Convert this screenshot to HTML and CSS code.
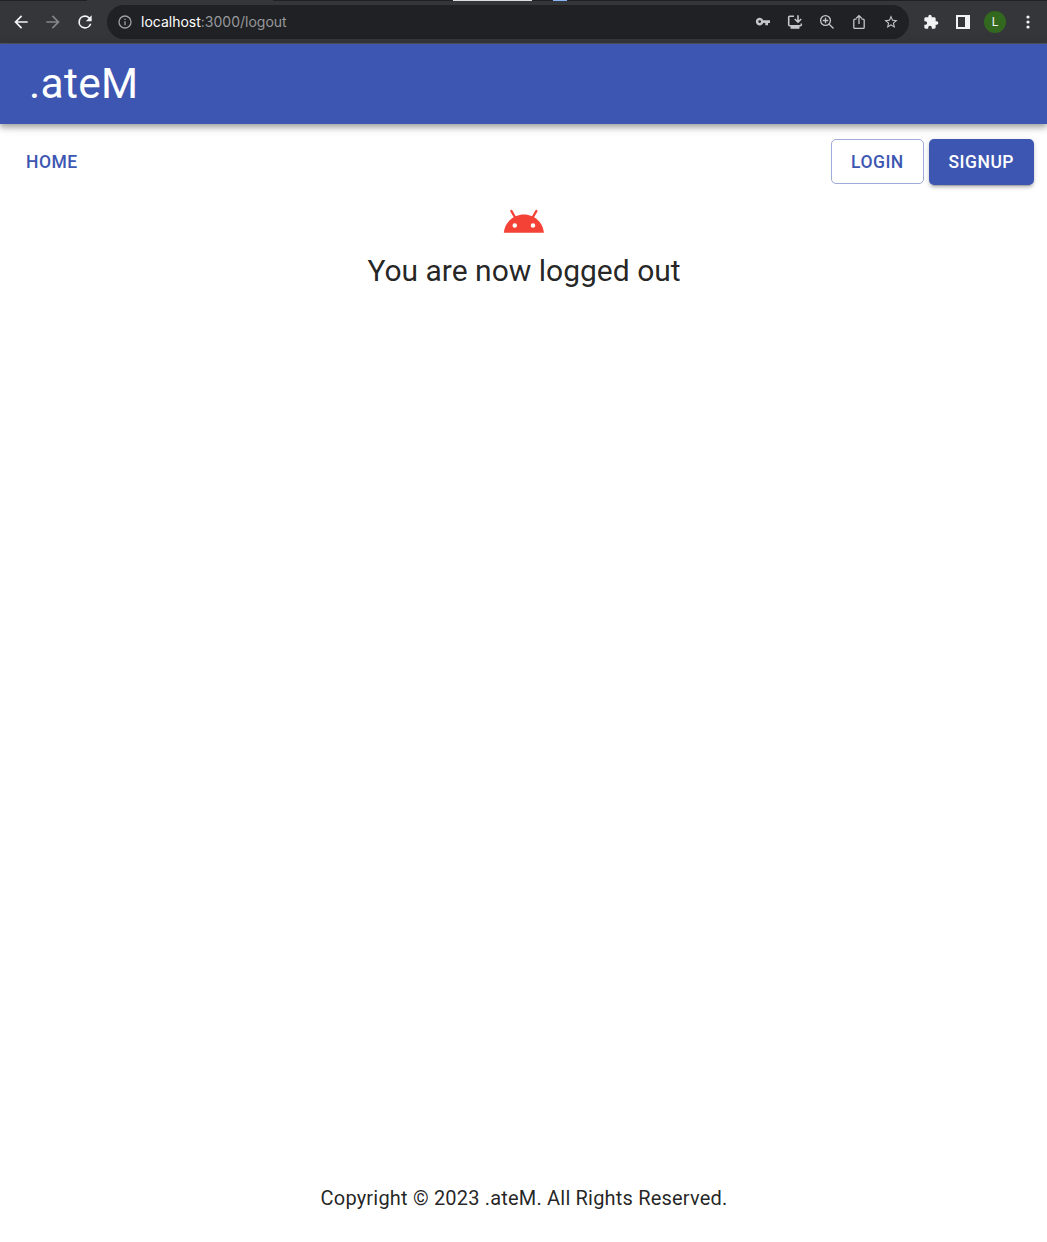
FILE: index.html
```html
<!DOCTYPE html>
<html lang="en">
<head>
<meta charset="utf-8">
<title>.ateM</title>
<link rel="stylesheet" href="styles.css">
</head>
<body>
<div class="browser">
  <div class="tab-edge"><span class="active-tab"></span><span class="tab-title"></span><span class="tab-favicon"></span></div>
  <div class="toolbar">
    <svg class="icon back" viewBox="0 0 24 24"><path d="M20 11H7.83l5.59-5.59L12 4l-8 8 8 8 1.41-1.41L7.83 13H20v-2z"/></svg>
    <svg class="icon forward" viewBox="0 0 24 24"><path d="M12 4l-1.41 1.41L16.17 11H4v2h12.17l-5.58 5.59L12 20l8-8z"/></svg>
    <svg class="icon reload" viewBox="0 0 24 24"><path d="M17.65 6.35A7.96 7.96 0 0 0 12 4a8 8 0 1 0 7.73 10h-2.08A6 6 0 1 1 12 6c1.66 0 3.14.69 4.22 1.78L13 11h7V4z"/></svg>
    <div class="omnibox">
      <svg class="info" viewBox="0 0 24 24"><path d="M11 7h2v2h-2zm0 4h2v6h-2zm1-9a10 10 0 1 0 0 20 10 10 0 0 0 0-20zm0 18a8 8 0 1 1 0-16 8 8 0 0 1 0 16z"/></svg>
      <div class="url"><span class="host">localhost</span>:3000/logout</div>
      <div class="actions">
        <svg viewBox="0 0 16 16"><path fill-rule="evenodd" d="M8.2 6.3A3.8 3.8 0 1 0 8.2 8.9H10.3V11.3H13V8.9H15V6.3ZM4.7 6.2a1.4 1.4 0 1 1 0 2.8 1.4 1.4 0 0 1 0-2.8Z"/></svg>
        <svg viewBox="0 0 16 16"><path class="stroke" d="M7 2.3H2.7Q1.7 2.3 1.7 3.3V10.7Q1.7 11.7 2.7 11.7H13.3Q14.3 11.7 14.3 10.7V9.5M11 1.2V8M7.8 5L11 8.2L14.2 5"/><path d="M3.5 12h9v2.8h-9z"/></svg>
        <svg viewBox="0 0 16 16"><path class="stroke thin" d="M10.2 10.2L14.5 14.5M3.8 6.5H9.2M6.5 3.8V9.2"/><circle class="stroke thin" cx="6.5" cy="6.5" r="4.9"/></svg>
        <svg viewBox="0 0 16 16"><path class="stroke thin" d="M5.5 5.2H3.8Q2.8 5.2 2.8 6.2V13.4Q2.8 14.4 3.8 14.4H12.2Q13.2 14.4 13.2 13.4V6.2Q13.2 5.2 12.2 5.2H10.5M8 10V1.8M5.3 4.3L8 1.6L10.7 4.3"/></svg>
        <svg viewBox="0 0 24 24"><path d="M22 9.24l-7.19-.62L12 2 9.19 8.63 2 9.24l5.46 4.73L5.82 21 12 17.27 18.18 21l-1.63-7.03L22 9.24zM12 15.4l-3.76 2.27 1-4.28-3.32-2.88 4.38-.38L12 6.1l1.71 4.04 4.38.38-3.32 2.88 1 4.28L12 15.4z"/></svg>
      </div>
    </div>
    <svg class="extension" viewBox="0 0 24 24"><path d="M20.5 11H19V7c0-1.1-.9-2-2-2h-4V3.5C13 2.12 11.88 1 10.5 1S8 2.12 8 3.5V5H4c-1.1 0-1.99.9-1.99 2v3.8H3.5c1.49 0 2.7 1.21 2.7 2.7s-1.21 2.7-2.7 2.7H2V20c0 1.1.9 2 2 2h3.8v-1.5c0-1.49 1.21-2.7 2.7-2.7s2.7 1.21 2.7 2.7V22H17c1.1 0 2-.9 2-2v-4h1.5a2.5 2.5 0 0 0 0-5z"/></svg>
    <svg class="panel" viewBox="0 0 14 14"><path fill-rule="evenodd" d="M0 0h14v14H0zM2 2v10h7V2z"/></svg>
    <span class="avatar">L</span>
    <svg class="menu" viewBox="0 0 4 14"><circle cx="2" cy="2" r="1.6"/><circle cx="2" cy="7" r="1.6"/><circle cx="2" cy="12" r="1.6"/></svg>
  </div>
</div>
<header class="app-bar"><h1>.ateM</h1></header>
<nav class="nav">
  <a class="button">HOME</a>
  <div class="nav-right">
    <a class="button outlined">LOGIN</a>
    <a class="button contained">SIGNUP</a>
  </div>
</nav>
<main class="content">
  <svg class="android" viewBox="0 0 24 24"><path d="M17.6 9.48l1.84-3.18c.16-.31.04-.69-.26-.85-.29-.15-.65-.06-.83.22l-1.88 3.24c-2.86-1.21-6.08-1.21-8.94 0L5.65 5.67c-.19-.29-.58-.38-.87-.2-.28.18-.37.54-.22.83L6.4 9.48C3.3 11.25 1.28 14.44 1 18h22c-.28-3.56-2.3-6.75-5.4-8.52zM7 15.25a1.25 1.25 0 1 1 0-2.5 1.25 1.25 0 0 1 0 2.5zm10 0a1.25 1.25 0 1 1 0-2.5 1.25 1.25 0 0 1 0 2.5z"/></svg>
  <h2>You are now logged out</h2>
</main>
<footer class="footer">Copyright © 2023 .ateM. All Rights Reserved.</footer>
</body>
</html>
```

FILE: styles.css
```css
* { box-sizing: border-box; }
body {
  margin: 0;
  height: 1242px;
  display: flex;
  flex-direction: column;
  overflow: hidden;
  background: #fff;
  color: rgba(0, 0, 0, .87);
  font-family: Roboto, "Liberation Sans", sans-serif;
}
svg { display: block; flex: none; fill: currentColor; }

.browser {
  height: 44px;
  flex: none;
  background: #35363a;
  border-bottom: 1px solid #56575a;
  color: #f1f3f4;
}
.tab-edge { height: 1px; background: #202124; display: flex; padding-left: 87px; }
.active-tab { width: 186px; background: #35363a; }
.tab-title { width: 79px; margin-left: 180px; background: #dadce0; }
.tab-favicon { width: 14px; margin-left: 21px; background: #8ab4f8; }
.toolbar { height: 42px; display: flex; align-items: center; padding: 0 17px 0 11px; }
.icon { width: 20px; height: 20px; margin-right: 12px; }
.forward { color: #85868a; }
.omnibox {
  width: 802px;
  height: 34px;
  flex: none;
  display: flex;
  align-items: center;
  padding: 0 10px;
  border-radius: 17px;
  background: #202124;
  color: #9aa0a6;
}
.info { width: 16px; height: 16px; }
.url { margin: 0 0 2px 8px; font: 14px Inter, "Liberation Sans", sans-serif; color: #96989b; }
.host { color: #fff; }
.actions { margin-left: auto; display: flex; gap: 16px; color: #c4c6c8; }
.actions svg { width: 16px; height: 16px; }
.stroke { fill: none; stroke: currentColor; stroke-width: 1.6; }
.thin { stroke-width: 1.3; }
.extension { width: 16px; height: 16px; margin-left: 14px; }
.panel { width: 14px; height: 14px; margin-left: 17px; }
.avatar {
  width: 22px;
  height: 22px;
  flex: none;
  margin-left: 14px;
  border-radius: 50%;
  background: #33691e;
  font-size: 12px;
  line-height: 23px;
  text-align: center;
}
.menu { width: 4px; height: 14px; margin-left: 19.5px; }

.app-bar {
  height: 80px;
  flex: none;
  display: flex;
  align-items: center;
  padding: 1px 0 0 29px;
  background: #3d56b2;
  color: #fff;
  box-shadow: 0 2px 5px rgba(0, 0, 0, .2), 0 5px 6px rgba(0, 0, 0, .14), 0 1px 12px rgba(0, 0, 0, .12);
}
h1 { margin: 0; font-size: 42.5px; font-weight: 400; line-height: 1.235; letter-spacing: .00735em; }

.nav { display: flex; justify-content: space-between; align-items: flex-start; padding: 15px 13px 0 16px; height: 76px; }
.nav-right { display: flex; align-items: flex-start; gap: 5px; }
.button {
  padding: 7.5px 10px;
  border-radius: 5px;
  color: #3d56b2;
  font-size: 17.5px;
  font-weight: 500;
  line-height: 30.6px;
  letter-spacing: .02857em;
}
.outlined { width: 93px; height: 45px; padding: 6.6px 0 0 19px; border: 1px solid rgba(61, 86, 178, .5); }
.contained {
  width: 105px;
  height: 46px;
  padding: 7.5px 0 0 19.5px;
  background: #3d56b2;
  color: #fff;
  box-shadow: 0 4px 1px -3px rgba(0, 0, 0, .2), 0 3px 3px rgba(0, 0, 0, .14), 0 1px 6px rgba(0, 0, 0, .12);
}

.content { flex: 1; display: flex; flex-direction: column; align-items: center; padding-left: 1px; }
.android { width: 43.75px; height: 43.75px; color: #f44336; }
h2 { margin: 7px 0 0; font-size: 30px; font-weight: 400; line-height: 40px; }
.footer { height: 59px; flex: none; padding-left: 1px; font-size: 20px; line-height: 30px; letter-spacing: .00938em; text-align: center; }
```
